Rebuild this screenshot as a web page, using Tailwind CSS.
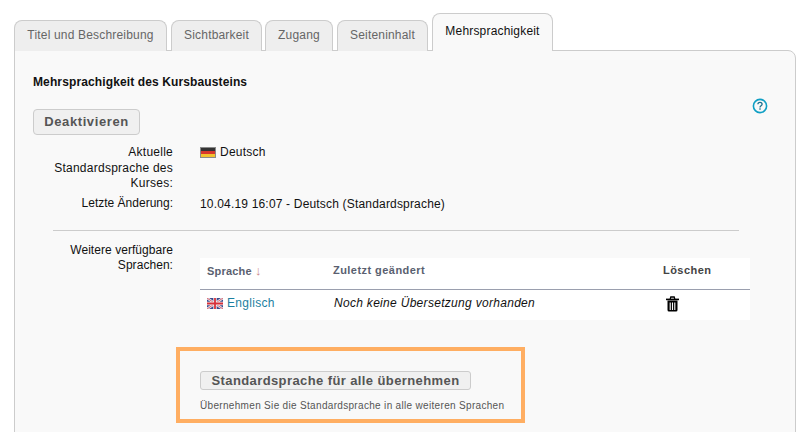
<!DOCTYPE html>
<html lang="de">
<head>
<meta charset="utf-8">
<script src="https://cdn.jsdelivr.net/npm/@tailwindcss/browser@4"></script>
</head>
<body class="bg-white">
<div class="h-[432px] w-[807px] overflow-hidden pl-[14px] pr-[11px] pt-[13px] font-['Liberation_Sans',Arial,sans-serif] text-[12px] leading-[15.5px] tracking-[0.18px] text-[#111]">
  <nav class="relative z-10 flex h-[38px] items-end">
    <a class="mr-[4px] flex h-[31px] w-[153px] items-center justify-center rounded-t-[8px] border border-b-0 border-[#ccc] bg-[#eee] pb-[1px] text-[#666]">Titel und Beschreibung</a>
    <a class="mr-[3px] flex h-[31px] w-[91px] items-center justify-center rounded-t-[8px] border border-b-0 border-[#ccc] bg-[#eee] pb-[1px] text-[#666]">Sichtbarkeit</a>
    <a class="mr-[4px] flex h-[31px] w-[68px] items-center justify-center rounded-t-[8px] border border-b-0 border-[#ccc] bg-[#eee] pb-[1px] text-[#666]">Zugang</a>
    <a class="mr-[4px] flex h-[31px] w-[91px] items-center justify-center rounded-t-[8px] border border-b-0 border-[#ccc] bg-[#eee] pb-[1px] text-[#666]">Seiteninhalt</a>
    <a class="flex h-[38px] w-[121px] items-center justify-center rounded-t-[8px] border border-b-0 border-[#ccc] bg-[#f9f9f9] pb-[1px] text-[#111]">Mehrsprachigkeit</a>
  </nav>
  <section class="-mt-px h-[400px] rounded-tr-[8px] border border-[#ccc] bg-[#f9f9f9] pl-[18px] pt-[24px]">
    <h3 class="h-[24px] font-bold tracking-[0.12px] text-[#111]">Mehrsprachigkeit des Kursbausteins</h3>
    <div class="flex items-start justify-between pr-[27px]">
      <button class="mt-[10px] h-[26px] w-[107px] rounded-[4px] border border-[#ccc] bg-[#f0f0f0] text-[13px] font-bold tracking-[0.6px] text-[#555]">Deaktivieren</button>
      <svg class="-mt-px h-[16px] w-[16px]" viewBox="0 0 16 16" fill="none"><circle cx="8" cy="8" r="6.6" stroke="#0f9fc4" stroke-width="1.6"/><path d="M5.9 6.3c0-1.2.9-2 2.1-2s2.1.8 2.1 1.9c0 1.5-2.1 1.6-2.1 3.2" stroke="#1a6f8c" stroke-width="1.3"/><rect x="7.3" y="10.3" width="1.4" height="1.4" fill="#1a6f8c"/></svg>
    </div>
    <div class="mt-[10px] flex">
      <div class="ml-[20px] w-[120px] text-right tracking-[0.25px]">Aktuelle Standardsprache des Kurses:</div>
      <div class="ml-[27px] flex items-center self-start tracking-[0.25px]">
        <svg class="mr-[4px] h-[11px] w-[16px]" viewBox="0 0 16 11"><rect width="16" height="11" fill="#8a8a8a"/><rect x="1" y="1" width="14" height="3" fill="#333"/><rect x="1" y="4" width="14" height="3" fill="#d8372c"/><rect x="1" y="7" width="14" height="3" fill="#f2c230"/></svg>
        <span>Deutsch</span>
      </div>
    </div>
    <div class="mt-[4.5px] flex">
      <div class="ml-[20px] w-[120px] text-right tracking-normal">Letzte Änderung:</div>
      <div class="ml-[27px] mt-[1px]">10.04.19 16:07 - Deutsch (Standardsprache)</div>
    </div>
    <hr class="ml-[20px] mt-[17px] w-[686px] border-t border-[#ccc]">
    <div class="mt-[12px] flex">
      <div class="ml-[20px] w-[120px] text-right tracking-[0.05px]">Weitere verfügbare Sprachen:</div>
      <div class="ml-[27px] mt-[15px] w-[550px] bg-white">
        <div class="flex h-[32px] items-center border-b border-[#9a9fae] pb-[4px] pl-[7px] text-[11px] font-bold tracking-[0.45px] text-[#5a5f70]">
          <div class="w-[126px] tracking-[0.2px]">Sprache <span class="text-[13px] font-normal text-[#c88]">↓</span></div>
          <div class="w-[330px]">Zuletzt geändert</div>
          <div class="text-[#444]">Löschen</div>
        </div>
        <div class="flex h-[30px] items-center pb-[2px] pl-[7px]">
          <div class="flex w-[127px] items-center tracking-[0.3px] text-[#1c7f9f]">
            <svg class="mr-[4px] h-[11px] w-[16px]" viewBox="0 0 16 11"><rect width="16" height="11" fill="#3a4a8c"/><path d="M0 0 16 11M16 0 0 11" stroke="#e8e8f0" stroke-width="2.4"/><path d="M0 0 16 11M16 0 0 11" stroke="#d8404a" stroke-width="0.8"/><path d="M8 0V11M0 5.5H16" stroke="#eee" stroke-width="3.4"/><path d="M8 0V11M0 5.5H16" stroke="#d8303a" stroke-width="1.8"/></svg>
            <span>Englisch</span>
          </div>
          <div class="w-[329px] italic tracking-[0.3px]">Noch keine Übersetzung vorhanden</div>
          <svg class="ml-[3px] h-[16px] w-[13px]" viewBox="0 0 13 16"><path d="M4.2 3 4.8 1h3.4l.6 2" fill="none" stroke="#000" stroke-width="1.3"/><rect y="2.6" width="13" height="1.6" fill="#000"/><path d="M1.5 4.5h10V14a1.5 1.5 0 0 1-1.5 1.5H3A1.5 1.5 0 0 1 1.5 14z" fill="#000"/><path d="M4.2 6.5v7.5M6.5 6.5v7.5M8.8 6.5v7.5" stroke="#fff" stroke-width="1.1"/></svg>
        </div>
      </div>
    </div>
    <div class="ml-[143px] mt-[27px] h-[76px] w-[349px] border-[4px] border-[#ffae62] pl-[20px] pt-[20px]">
      <button class="block h-[19px] w-[271px] rounded-[3px] border border-[#ccc] bg-[#f0f0f0] text-[13px] font-bold leading-[17px] tracking-[0.4px] text-[#555]">Standardsprache für alle übernehmen</button>
      <p class="mt-[9px] text-[10px] leading-[14px] tracking-[0.32px] text-[#555]">Übernehmen Sie die Standardsprache in alle weiteren Sprachen</p>
    </div>
  </section>
</div>
</body>
</html>
